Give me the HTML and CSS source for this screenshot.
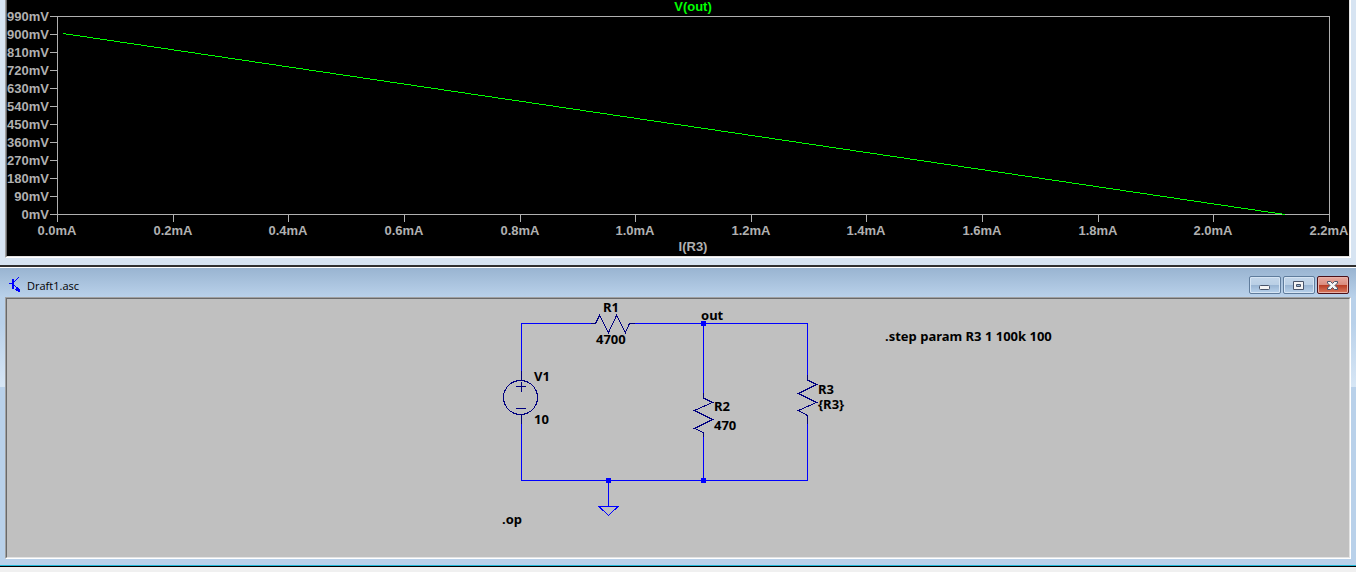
FILE: index.html
```
<!DOCTYPE html>
<html lang="en">
<head>
<meta charset="utf-8">
<title>Draft1.asc</title>
<link rel="stylesheet" href="styles.css">
</head>
<body>
<main class="workspace">
  <section class="window plot-window" aria-label="Waveform">
    <div class="client">
      <svg class="plot" viewBox="7 0 1342 256" role="img" aria-label="V(out) against I(R3)">
        <path class="axis" d="M57.500 16.500H1329.500V214.500H57.500ZM50 16.500h7M50 34.500h7M50 52.500h7M50 70.500h7M50 88.500h7M50 106.500h7M50 124.500h7M50 142.500h7M50 160.500h7M50 178.500h7M50 196.500h7M50 214.500h7M57.500 214v8M173.500 214v8M288.500 214v8M404.500 214v8M520.500 214v8M635.500 214v8M751.500 214v8M866.500 214v8M982.500 214v8M1098.500 214v8M1213.500 214v8M1329.500 214v8"/>
        <path class="trace" d="M63 33.500L1285 214.500"/>
        <text class="trace-name" x="693" y="11">V(out)</text>
        <g class="y-labels">
          <text x="49" y="21">990mV</text>
          <text x="49" y="39">900mV</text>
          <text x="49" y="57">810mV</text>
          <text x="49" y="75">720mV</text>
          <text x="49" y="93">630mV</text>
          <text x="49" y="111">540mV</text>
          <text x="49" y="129">450mV</text>
          <text x="49" y="147">360mV</text>
          <text x="49" y="165">270mV</text>
          <text x="49" y="183">180mV</text>
          <text x="49" y="201">90mV</text>
          <text x="49" y="219">0mV</text>
        </g>
        <g class="x-labels">
          <text x="57" y="235">0.0mA</text>
          <text x="173" y="235">0.2mA</text>
          <text x="288" y="235">0.4mA</text>
          <text x="404" y="235">0.6mA</text>
          <text x="520" y="235">0.8mA</text>
          <text x="635" y="235">1.0mA</text>
          <text x="751" y="235">1.2mA</text>
          <text x="866" y="235">1.4mA</text>
          <text x="982" y="235">1.6mA</text>
          <text x="1098" y="235">1.8mA</text>
          <text x="1213" y="235">2.0mA</text>
          <text x="1329" y="235">2.2mA</text>
          <text x="693" y="251">I(R3)</text>
        </g>
      </svg>
    </div>
  </section>
  <section class="window schematic-window" aria-label="Draft1.asc">
    <header class="titlebar">
      <svg class="app-icon" viewBox="0 0 12 16" aria-hidden="true">
        <path d="M0 7.500h4M5 6l5-5M5 9l4 4"/>
        <path class="bar" d="M4 3v10"/>
        <path class="arrow" d="M7 11h2v1h1v1h1v3h-2v-1h-2v-1h-1v-1h1z"/>
      </svg>
      <h1 class="title">Draft1.asc</h1>
      <div class="controls">
        <button class="control" type="button" aria-label="Minimize">
          <svg class="glyph" viewBox="0 0 28 14"><rect x="8.500" y="7.500" width="10" height="4" rx="1"/></svg>
        </button>
        <button class="control" type="button" aria-label="Restore">
          <svg class="glyph" viewBox="0 0 28 14"><path fill-rule="evenodd" d="M8.500 3.500h10v8h-10zM11.500 6.500h4v2h-4z"/></svg>
        </button>
        <button class="control close" type="button" aria-label="Close">
          <svg class="glyph" viewBox="0 0 28 14"><path d="M8.500 3.500h3l2 2 2-2h3v1.500l-2.500 2.500 2.500 2.500v1.500h-3l-2-2-2 2h-3V10l2.500-2.500-2.500-2.500z"/></svg>
        </button>
      </div>
    </header>
    <div class="client">
      <svg class="schematic" viewBox="7 299 1342 258" role="img" aria-label="Circuit schematic">
        <path class="wire" d="M521.500 371V323.500H591M635 323.500H807.500V375M703.500 323V393M521.500 424V480.500H807.500V424M703.500 437V480M608.500 480V506M598 506.500H618L608.500 515.500L599 506.500"/>
        <g class="part">
          <path d="M591 323.500H595.500L599.500 315.500L608.500 332.500L616.500 315.500L625.500 332.500L629.500 323.500H635"/>
          <path d="M703.500 393V398L712.500 402.500L694.500 410.500L712.500 419.500L694.500 428.500L703.500 432.500V437"/>
          <path d="M807.500 375V380L816.500 384.500L798.500 393.500L816.500 402.500L798.500 410.500L807.500 415.500V424"/>
          <path d="M521.500 371V380M521.500 414V424M516 386.500H526M521.500 382V392M516 408.500H526"/>
          <circle cx="520.500" cy="397.500" r="17"/>
        </g>
        <path class="node" d="M701 321h5v5h-5zM701 478h5v5h-5zM606 478h5v5h-5z"/>
        <g class="notes">
          <text x="603" y="312">R1</text>
          <text x="596" y="344">4700</text>
          <text x="701" y="320">out</text>
          <text x="534" y="381">V1</text>
          <text x="534" y="424">10</text>
          <text x="714" y="411">R2</text>
          <text x="714" y="430">470</text>
          <text x="818" y="394">R3</text>
          <text x="818" y="409">{R3}</text>
          <text x="885" y="341">.step param R3 1 100k 100</text>
          <text x="502" y="524">.op</text>
        </g>
      </svg>
    </div>
  </section>
</main>
</body>
</html>
```
FILE: styles.css
```
body {
  margin: 0;
  background: #f0f0f0;
}

.workspace {
  display: flex;
  flex-direction: column;
}

.window {
  padding: 0 5px;
}

.client {
  border: 1px solid;
  border-color: #a0a0a0 #fff #fff #a0a0a0;
}

.plot,
.schematic {
  display: block;
  width: calc(100% - 2px);
  height: auto;
  border: 1px solid;
  border-color: #696969 #e3e3e3 #e3e3e3 #696969;
}

.plot-window {
  padding-bottom: 7px;
  border-bottom: 2px solid #303030;
  background: #d7e4f2;
}

.plot-window .client {
  border-top: 0;
}

.plot {
  border-top: 0;
  background: #000;
  font: bold 13px "Liberation Sans", Arial, sans-serif;
}

.axis {
  fill: none;
  stroke: #b0b0b0;
  shape-rendering: crispEdges;
}

.trace {
  fill: none;
  stroke: #0f0;
  shape-rendering: crispEdges;
}

.trace-name {
  fill: #0f0;
  text-anchor: middle;
}

.y-labels {
  fill: #b0b0b0;
  text-anchor: end;
}

.x-labels {
  fill: #b0b0b0;
  text-anchor: middle;
}

.schematic-window {
  padding-bottom: 7px;
  border-top: 1px solid #fff;
  border-bottom: 1px solid #000;
  background: linear-gradient(#99b4d1, #b9d1ea 29px, #b9d1ea 55px, #d7e6f5 119px, #b9d1ea 119px);
  box-shadow: inset 0 -1px #20b8d8, 0 2px #fff, 0 3px #d9d9d9;
}

.titlebar {
  display: flex;
  align-items: center;
  height: 29px;
  padding: 0 2px 0 4px;
  gap: 6px;
}

.app-icon {
  width: 12px;
  height: 16px;
  padding-top: 3px;
  fill: none;
  stroke: #00f;
  shape-rendering: crispEdges;
}

.bar {
  stroke-width: 2;
}

.arrow {
  fill: #00f;
  stroke: none;
}

.title {
  flex: 1;
  margin: 0;
  padding-top: 6px;
  color: #000;
  font: 11px/16px "Open Sans", "Segoe UI", sans-serif;
}

.controls {
  display: flex;
  gap: 2px;
  padding-top: 5px;
}

.control {
  width: 32px;
  height: 18px;
  padding: 0;
  border: 1px solid #5f7c9c;
  border-radius: 2px;
  background: linear-gradient(#c3d6ea, #b9cfe5 50%, #98b4d2 50%, #b8d2ec);
  box-shadow: inset 0 0 0 1px #d6e5f4;
}

.close {
  border-color: #4b1018;
  background: linear-gradient(#e8aaa0, #d98a7c 50%, #b83a22 50%, #d87a60);
  box-shadow: inset 0 0 0 1px #e9b2a8;
}

.glyph {
  display: block;
  width: 28px;
  height: 14px;
  margin: 0 auto;
  fill: #f4f4f4;
  stroke: #48546a;
}

.schematic {
  background: #c0c0c0;
}

.wire {
  fill: none;
  stroke: #00f;
  shape-rendering: crispEdges;
}

.part {
  fill: none;
  stroke: #000080;
  shape-rendering: crispEdges;
}

.node {
  fill: #00f;
}

.notes {
  fill: #000;
  font: bold 13px "Noto Sans", Tahoma, sans-serif;
}
```
